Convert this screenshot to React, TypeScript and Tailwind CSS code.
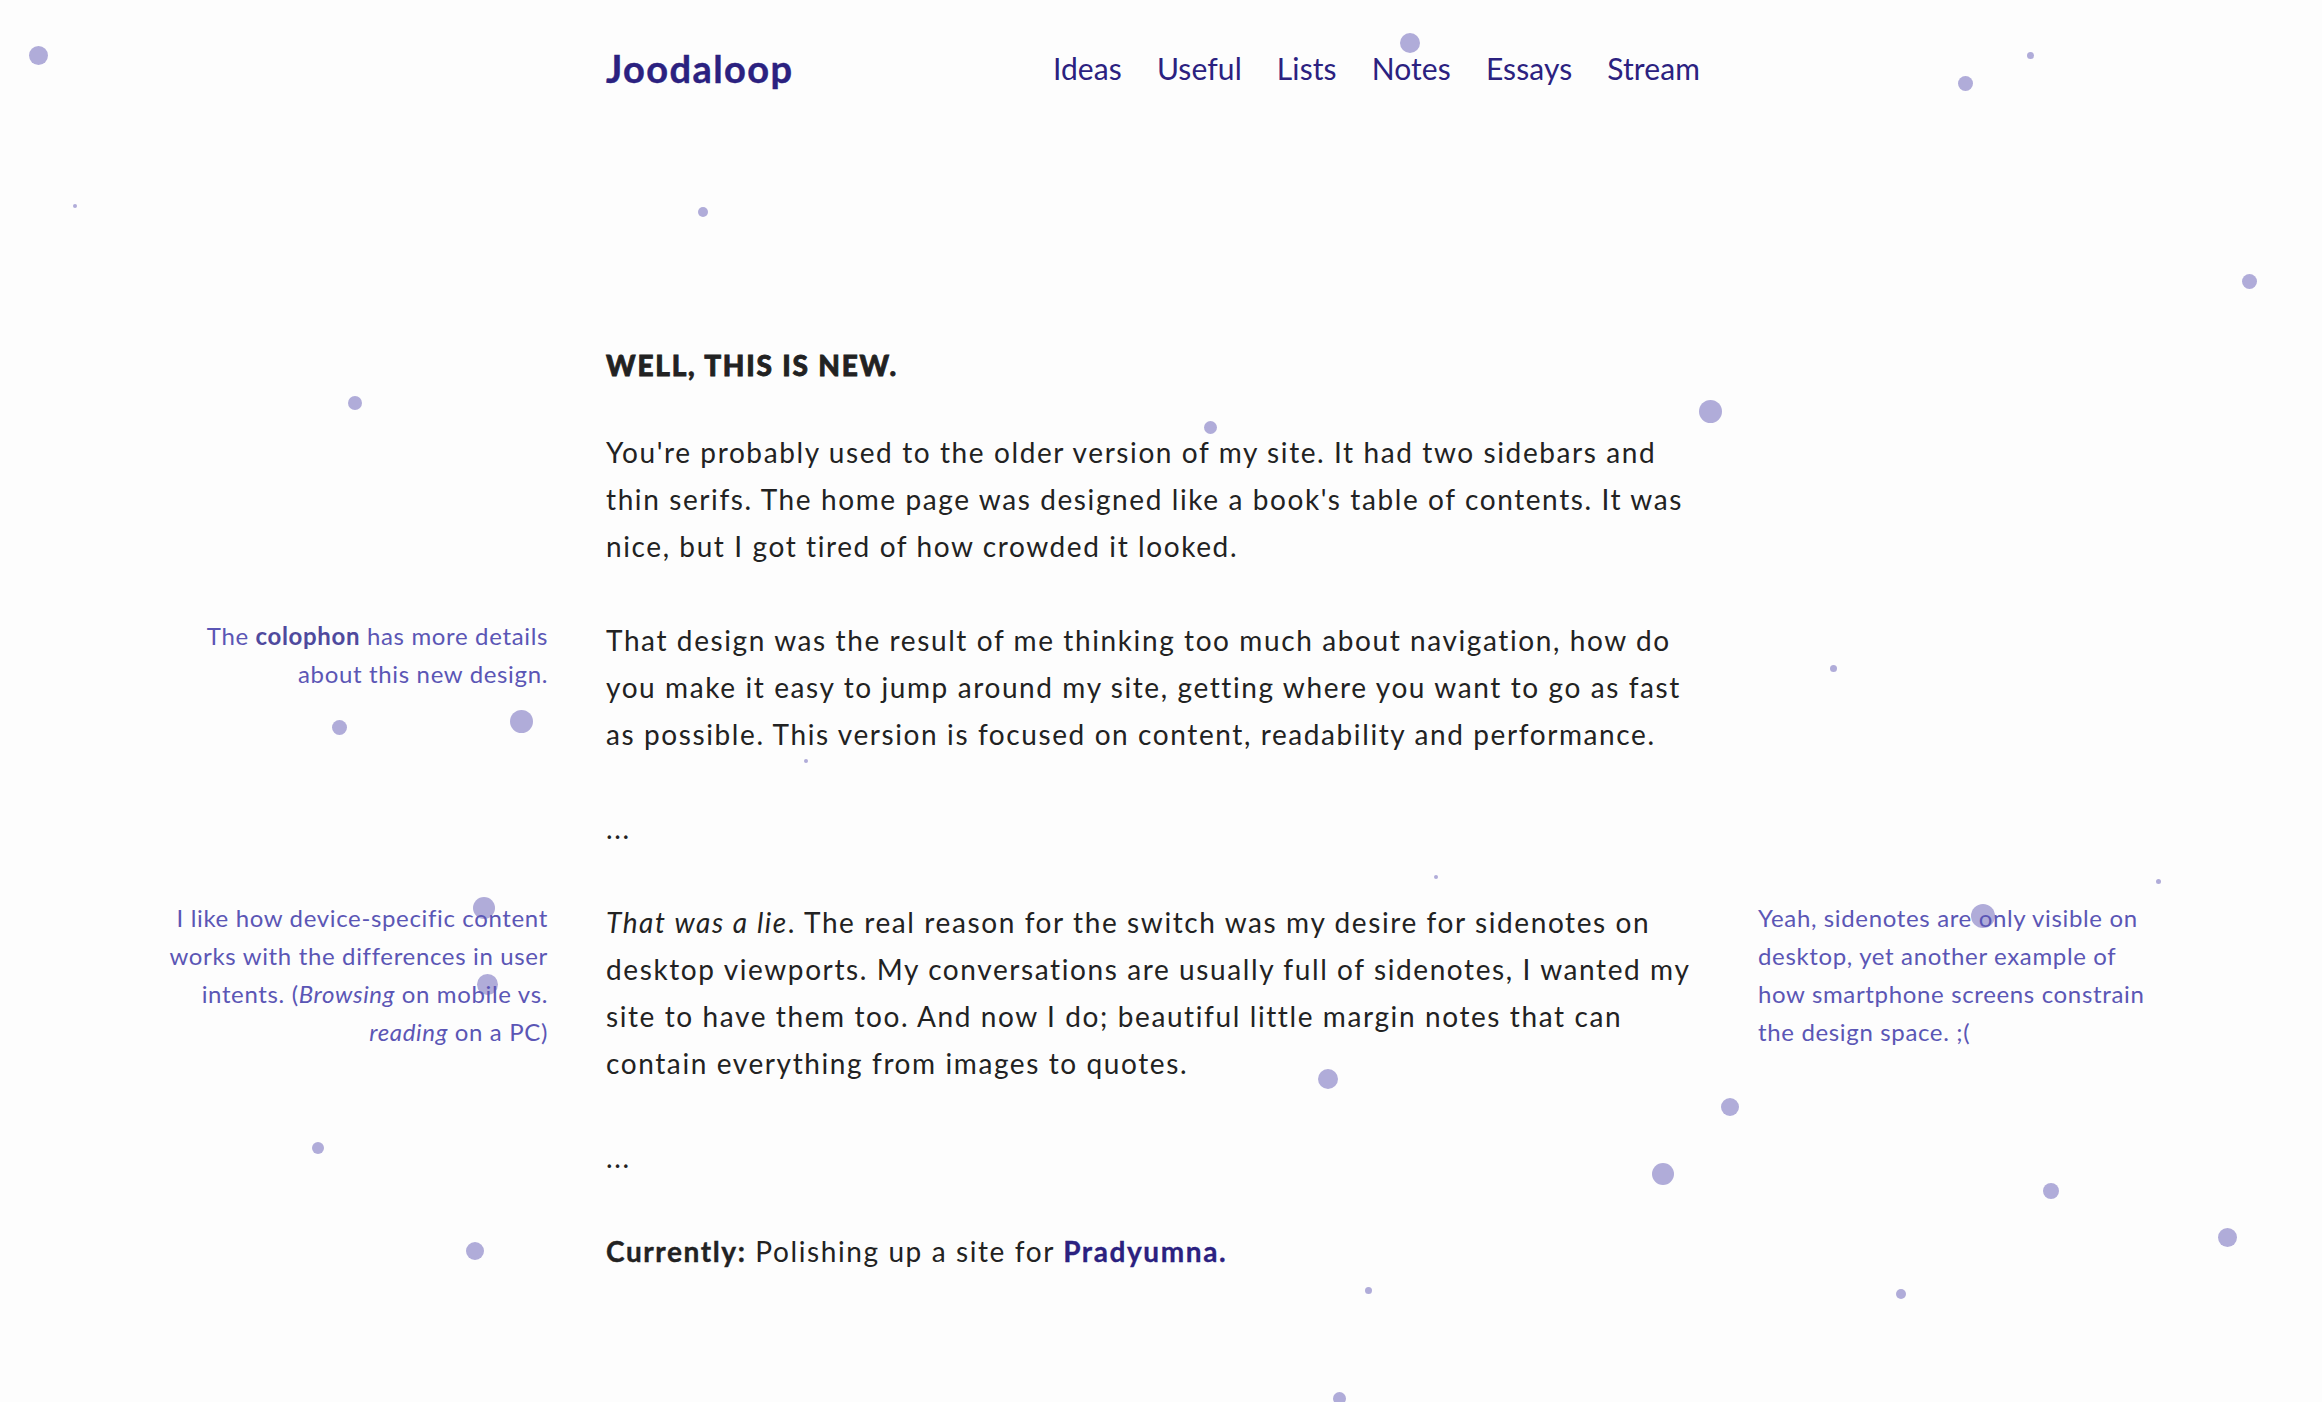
import React from 'react';

const dots: [number, number, number][] = [
  [38, 55, 19],
  [75, 206, 4],
  [703, 212, 10],
  [1410, 43, 20],
  [1965, 83, 15],
  [2030, 55, 7],
  [2249, 281, 15],
  [355, 403, 14],
  [1210, 427, 13],
  [1710, 411, 23],
  [339, 727, 15],
  [521, 721, 23],
  [806, 761, 4],
  [1833, 668, 7],
  [1436, 877, 4],
  [2158, 881, 5],
  [484, 908, 22],
  [487, 984, 21],
  [1983, 916, 24],
  [1328, 1079, 20],
  [1730, 1107, 18],
  [1663, 1174, 22],
  [318, 1148, 12],
  [2051, 1191, 16],
  [2227, 1237, 19],
  [475, 1251, 18],
  [1368, 1290, 7],
  [1901, 1294, 10],
  [1339, 1398, 13],
];

const navLinks = ['Ideas', 'Useful', 'Lists', 'Notes', 'Essays', 'Stream'];

function Sidenote({ side, children }: { side: 'left' | 'right'; children: React.ReactNode }) {
  return (
    <aside
      className={`text-[24px] leading-[38px] tracking-[0.65px] text-[#5b56b5] ${
        side === 'left' ? 'text-right' : 'text-left -ml-[6px]'
      }`}
    >
      {children}
    </aside>
  );
}

function Row({
  left,
  right,
  children,
}: {
  left?: React.ReactNode;
  right?: React.ReactNode;
  children: React.ReactNode;
}) {
  return (
    <div className="grid grid-cols-[400px_1100px_400px] gap-x-[58px] mb-[47px]">
      <div>{left}</div>
      <div>{children}</div>
      <div>{right}</div>
    </div>
  );
}

export default function App() {
  return (
    <div
      className="relative min-h-screen overflow-hidden bg-[#fdfdfd] text-[#222222]"
      style={{ fontFamily: '"Lato", "Noto Sans", sans-serif' }}
    >
      {/* floating dots */}
      <div className="pointer-events-none absolute inset-0">
        {dots.map(([x, y, d], i) => (
          <span
            key={i}
            className="absolute rounded-full bg-[#b0acd9]"
            style={{ left: x - d / 2, top: y - d / 2, width: d, height: d }}
          />
        ))}
      </div>

      <div className="relative ml-[148px] w-[2016px]">
        <header className="grid grid-cols-[400px_1100px_400px] gap-x-[58px] pt-[44px]">
          <div />
          <div className="flex w-[1094px] items-center justify-between h-[48px]">
            <a className="text-[38px] font-bold text-[#2b2180] tracking-[1.4px] [-webkit-text-stroke:0.4px_#2b2180]">
              Joodaloop
            </a>
            <nav className="flex items-center gap-[35px] text-[30px] tracking-[0.1px] text-[#2b2180]">
              {navLinks.map((l) => (
                <a key={l}>{l}</a>
              ))}
            </nav>
          </div>
          <div />
        </header>

        <main className="mt-[253px] text-[28px] leading-[47px] tracking-[1.6px]">
          <Row>
            <h1 className="font-black uppercase leading-[40px] -mb-[3px] tracking-[1.8px] [-webkit-text-stroke:0.8px_#222222]">
              Well, this is new.
            </h1>
          </Row>

          <Row>
            <p>
              You're probably used to the older version of my site. It had two sidebars and thin
              serifs. The home page was designed like a book's table of contents. It was nice, but
              I got tired of how crowded it looked.
            </p>
          </Row>

          <Row
            left={
              <Sidenote side="left">
                The <b className="font-bold text-[#4f4a9e]">colophon</b> has more details about this
                new design.
              </Sidenote>
            }
          >
            <p>
              That design was the result of me thinking too much about navigation, how do you make
              it easy to jump around my site, getting where you want to go as fast as possible.
              This version is focused on content, readability and performance.
            </p>
          </Row>

          <Row>
            <p>...</p>
          </Row>

          <Row
            left={
              <Sidenote side="left">
                I like how device-specific content works with the differences in user intents. (
                <i>Browsing</i> on mobile vs. <i>reading</i> on a PC)
              </Sidenote>
            }
            right={
              <Sidenote side="right">
                Yeah, sidenotes are only visible on desktop, yet another example of how smartphone
                screens constrain the design space. ;(
              </Sidenote>
            }
          >
            <p>
              <i>That was a lie</i>. The real reason for the switch was my desire for sidenotes on
              desktop viewports. My conversations are usually full of sidenotes, I wanted my site
              to have them too. And now I do; beautiful little margin notes that can contain
              everything from images to quotes.
            </p>
          </Row>

          <Row>
            <p>...</p>
          </Row>

          <Row>
            <p>
              <b className="font-bold [-webkit-text-stroke:0.4px_#222222]">Currently:</b> Polishing
              up a site for{' '}
              <a className="font-bold text-[#2b2180] [-webkit-text-stroke:0.3px_#2b2180]">
                Pradyumna.
              </a>
            </p>
          </Row>
        </main>
      </div>
    </div>
  );
}
